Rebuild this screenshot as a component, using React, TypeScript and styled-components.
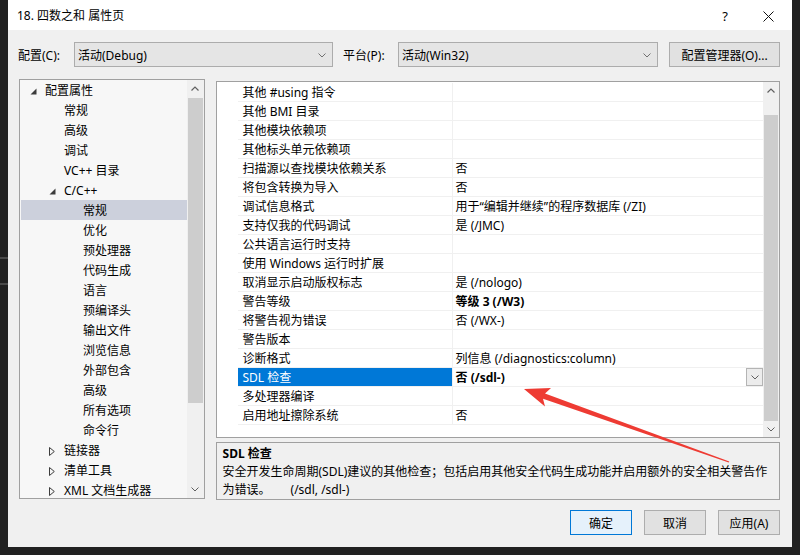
import React from "react";
import styled, { createGlobalStyle } from "styled-components";

const GlobalStyle = createGlobalStyle`
  html, body { margin: 0; padding: 0; background: #212121; }
  body {
    font-family: "Noto Sans", "Noto Sans CJK SC", sans-serif;
    font-size: 12px;
    color: #000;
  }
  * { box-sizing: border-box; }
`;

const Page = styled.div`
  position: relative;
  width: 800px;
  height: 555px;
  padding: 0 8px 8px 8px;
  background-color: #212121;
  background-image: linear-gradient(#4a4a4a, #4a4a4a), linear-gradient(#4a4a4a, #4a4a4a);
  background-size: 8px 2px, 8px 2px;
  background-position: 0 257px, 0 283px;
  background-repeat: no-repeat;
`;

const Dialog = styled.div`
  width: 784px;
  height: 547px;
  background: #f0f0f0;
  display: flex;
  flex-direction: column;
`;

const TitleBar = styled.div`
  height: 30px;
  background: #fff;
  display: flex;
  align-items: center;
  padding: 2px 9px 0 9px;
`;

const TitleText = styled.div`
  flex: 1;
  font-size: 12px;
  line-height: 16px;
`;

const HelpGlyph = styled.div`
  width: 20px;
  text-align: center;
  font-size: 13px;
  line-height: 16px;
  margin-right: 18px;
`;

const CloseBox = styled.div`
  width: 30px;
  height: 20px;
  display: flex;
  align-items: center;
  justify-content: center;
`;

const ConfigRow = styled.div`
  margin-top: 12px;
  height: 25px;
  display: flex;
  align-items: center;
  padding-left: 10px;
`;

const FieldLabel = styled.div<{ $w: number; $ml?: number }>`
  width: ${(p) => p.$w}px;
  margin-left: ${(p) => p.$ml ?? 0}px;
  padding-top: 2px;
  line-height: 16px;
`;

const Combo = styled.div<{ $w: number }>`
  width: ${(p) => p.$w}px;
  height: 25px;
  background: #e5e5e5;
  border: 1px solid #acacac;
  display: flex;
  align-items: center;
  padding: 2px 6px 0 3px;
  line-height: 16px;
`;

const ComboText = styled.div`
  flex: 1;
`;

const PushButton = styled.div<{ $w: number; $ml?: number; $default?: boolean }>`
  width: ${(p) => p.$w}px;
  height: 25px;
  margin-left: ${(p) => p.$ml ?? 0}px;
  padding-top: 2px;
  background: ${(p) => (p.$default ? "#e5f1fb" : "#e1e1e1")};
  border: 1px solid ${(p) => (p.$default ? "#0078d7" : "#adadad")};
  display: flex;
  align-items: center;
  justify-content: center;
  line-height: 16px;
`;

const Main = styled.div`
  margin-top: 12px;
  display: flex;
  padding: 0 12px 0 11px;
  gap: 11px;
`;

const TreePanel = styled.div`
  width: 186px;
  height: 420px;
  border: 1px solid #a0a0a0;
  background: #f7f7f7;
  display: flex;
`;

const TreeList = styled.div`
  flex: 1;
  margin-left: 1px;
  display: flex;
  flex-direction: column;
  overflow: hidden;
`;

const TreeRow = styled.div<{ $level: number; $selected?: boolean }>`
  height: 20px;
  flex: none;
  display: flex;
  align-items: center;
  padding-top: 2px;
  padding-left: ${(p) => 5 + 19 * p.$level}px;
  background: ${(p) => (p.$selected ? "#ccd0dc" : "transparent")};
  white-space: nowrap;
  line-height: 16px;
`;

const Toggle = styled.div`
  width: 19px;
  height: 16px;
  display: flex;
  align-items: center;
  padding-left: 4px;
  flex: none;
`;

const ScrollBar = styled.div<{ $w: number }>`
  width: ${(p) => p.$w}px;
  flex: none;
  display: flex;
  flex-direction: column;
  background: #f0f0f0;
`;

const ScrollArrow = styled.div<{ $h: number }>`
  height: ${(p) => p.$h}px;
  flex: none;
  display: flex;
  align-items: center;
  justify-content: center;
`;

const ScrollTrack = styled.div<{ $before: number }>`
  flex: 1;
  padding-top: ${(p) => p.$before}px;
  display: flex;
  flex-direction: column;
`;

const ScrollThumb = styled.div<{ $h: number }>`
  height: ${(p) => p.$h}px;
  margin: 0 1px;
  background: #cdcdcd;
`;

const RightColumn = styled.div`
  width: 566px;
  padding-top: 2px;
  display: flex;
  flex-direction: column;
  gap: 4px;
`;

const GridPanel = styled.div`
  height: 357px;
  border: 1px solid #a0a0a0;
  background: #fff;
  display: flex;
`;

const Gutter = styled.div`
  width: 21px;
  flex: none;
`;

const GridRows = styled.div`
  flex: 1;
  padding-top: 1px;
  display: flex;
  flex-direction: column;
`;

const GridRow = styled.div`
  height: 19px;
  display: flex;
  border-bottom: 1px solid #f0f0f0;
`;

const NameCell = styled.div<{ $selected?: boolean }>`
  width: 215px;
  flex: none;
  padding: 2px 0 0 5px;
  display: flex;
  align-items: center;
  border-right: 1px solid #f0f0f0;
  background: ${(p) => (p.$selected ? "#0078d7" : "transparent")};
  color: ${(p) => (p.$selected ? "#fff" : "#000")};
  white-space: nowrap;
  line-height: 16px;
`;

const ValueCell = styled.div<{ $bold?: boolean }>`
  flex: 1;
  padding-left: 3px;
  display: flex;
  align-items: center;
  font-weight: ${(p) => (p.$bold ? 700 : 400)};
  white-space: nowrap;
  line-height: 16px;
`;

const ValueText = styled.div`
  flex: 1;
  padding-top: 2px;
`;

const DropButton = styled.div`
  width: 17px;
  height: 18px;
  border: 1px solid #b4b4b4;
  background: #ececec;
  display: flex;
  align-items: center;
  justify-content: center;
`;

const DescPanel = styled.div`
  height: 58px;
  border: 1px solid #a0a0a0;
  background: #f0f0f0;
  padding: 2px 6px 0 6px;
`;

const DescTitle = styled.div`
  font-weight: 700;
  line-height: 18px;
`;

const DescLine = styled.div`
  line-height: 18px;
  white-space: nowrap;
`;

const DescSwitch = styled.span`
  margin-left: 20px;
`;

const Footer = styled.div`
  margin-top: 10px;
  display: flex;
  justify-content: flex-end;
  gap: 12px;
  padding-right: 12px;
`;

const Overlay = styled.svg`
  position: absolute;
  left: 0;
  top: 0;
  pointer-events: none;
`;

const ChevronDown = ({ color = "#606060" }: { color?: string }) => (
  <svg width="8" height="5" viewBox="0 0 8 5">
    <polyline points="0.5,0.5 4,4 7.5,0.5" fill="none" stroke={color} strokeWidth="1" />
  </svg>
);

const ChevronUp = ({ color = "#606060" }: { color?: string }) => (
  <svg width="8" height="5" viewBox="0 0 8 5">
    <polyline points="0.5,4.5 4,1 7.5,4.5" fill="none" stroke={color} strokeWidth="1.2" />
  </svg>
);

const Expanded = () => (
  <svg width="7" height="7" viewBox="0 0 7 7">
    <polygon points="6.5,0.5 6.5,6.5 0.5,6.5" fill="#3c3c3c" />
  </svg>
);

const Collapsed = () => (
  <svg width="6" height="9" viewBox="0 0 6 9">
    <polygon points="0.5,0.5 5.3,4.5 0.5,8.5" fill="none" stroke="#3c3c3c" strokeWidth="1" />
  </svg>
);

type TreeItem = { label: string; level: number; toggle?: "open" | "closed"; selected?: boolean };

const treeItems: TreeItem[] = [
  { label: "配置属性", level: 0, toggle: "open" },
  { label: "常规", level: 1 },
  { label: "高级", level: 1 },
  { label: "调试", level: 1 },
  { label: "VC++ 目录", level: 1 },
  { label: "C/C++", level: 1, toggle: "open" },
  { label: "常规", level: 2, selected: true },
  { label: "优化", level: 2 },
  { label: "预处理器", level: 2 },
  { label: "代码生成", level: 2 },
  { label: "语言", level: 2 },
  { label: "预编译头", level: 2 },
  { label: "输出文件", level: 2 },
  { label: "浏览信息", level: 2 },
  { label: "外部包含", level: 2 },
  { label: "高级", level: 2 },
  { label: "所有选项", level: 2 },
  { label: "命令行", level: 2 },
  { label: "链接器", level: 1, toggle: "closed" },
  { label: "清单工具", level: 1, toggle: "closed" },
  { label: "XML 文档生成器", level: 1, toggle: "closed" },
];

type Prop = { name: string; value: string; bold?: boolean; selected?: boolean };

const props: Prop[] = [
  { name: "其他 #using 指令", value: "" },
  { name: "其他 BMI 目录", value: "" },
  { name: "其他模块依赖项", value: "" },
  { name: "其他标头单元依赖项", value: "" },
  { name: "扫描源以查找模块依赖关系", value: "否" },
  { name: "将包含转换为导入", value: "否" },
  { name: "调试信息格式", value: "用于“编辑并继续”的程序数据库 (/ZI)" },
  { name: "支持仅我的代码调试", value: "是 (/JMC)" },
  { name: "公共语言运行时支持", value: "" },
  { name: "使用 Windows 运行时扩展", value: "" },
  { name: "取消显示启动版权标志", value: "是 (/nologo)" },
  { name: "警告等级", value: "等级 3 (/W3)", bold: true },
  { name: "将警告视为错误", value: "否 (/WX-)" },
  { name: "警告版本", value: "" },
  { name: "诊断格式", value: "列信息 (/diagnostics:column)" },
  { name: "SDL 检查", value: "否 (/sdl-)", bold: true, selected: true },
  { name: "多处理器编译", value: "" },
  { name: "启用地址擦除系统", value: "否" },
];

export default function App() {
  return (
    <>
      <GlobalStyle />
      <Page>
        <Dialog>
          <TitleBar>
            <TitleText>18. 四数之和 属性页</TitleText>
            <HelpGlyph>?</HelpGlyph>
            <CloseBox>
              <svg width="11" height="11" viewBox="0 0 11 11">
                <path d="M0.5 0.5 L10.5 10.5 M10.5 0.5 L0.5 10.5" stroke="#111" strokeWidth="1" />
              </svg>
            </CloseBox>
          </TitleBar>

          <ConfigRow>
            <FieldLabel $w={56}>配置(C):</FieldLabel>
            <Combo $w={259}>
              <ComboText>活动(Debug)</ComboText>
              <ChevronDown color="#707070" />
            </Combo>
            <FieldLabel $w={55} $ml={10}>平台(P):</FieldLabel>
            <Combo $w={260}>
              <ComboText>活动(Win32)</ComboText>
              <ChevronDown color="#707070" />
            </Combo>
            <PushButton $w={111} $ml={11}>配置管理器(O)...</PushButton>
          </ConfigRow>

          <Main>
            <TreePanel>
              <TreeList>
                {treeItems.map((it, i) => (
                  <TreeRow key={i} $level={it.level} $selected={it.selected}>
                    {it.toggle ? (
                      <Toggle>{it.toggle === "open" ? <Expanded /> : <Collapsed />}</Toggle>
                    ) : (
                      <Toggle />
                    )}
                    {it.label}
                  </TreeRow>
                ))}
              </TreeList>
              <ScrollBar $w={17}>
                <ScrollArrow $h={17}>
                  <ChevronUp />
                </ScrollArrow>
                <ScrollTrack $before={1}>
                  <ScrollThumb $h={305} />
                </ScrollTrack>
                <ScrollArrow $h={17}>
                  <ChevronDown />
                </ScrollArrow>
              </ScrollBar>
            </TreePanel>

            <RightColumn>
              <GridPanel>
                <Gutter />
                <GridRows>
                  {props.map((p, i) => (
                    <GridRow key={i}>
                      <NameCell $selected={p.selected}>{p.name}</NameCell>
                      <ValueCell $bold={p.bold}>
                        <ValueText>{p.value}</ValueText>
                        {p.selected && (
                          <DropButton>
                            <ChevronDown color="#606060" />
                          </DropButton>
                        )}
                      </ValueCell>
                    </GridRow>
                  ))}
                </GridRows>
                <ScrollBar $w={16}>
                  <ScrollArrow $h={17}>
                    <ChevronUp />
                  </ScrollArrow>
                  <ScrollTrack $before={16}>
                    <ScrollThumb $h={306} />
                  </ScrollTrack>
                  <ScrollArrow $h={16}>
                    <ChevronDown />
                  </ScrollArrow>
                </ScrollBar>
              </GridPanel>

              <DescPanel>
                <DescTitle>SDL 检查</DescTitle>
                <DescLine>安全开发生命周期(SDL)建议的其他检查；包括启用其他安全代码生成功能并启用额外的安全相关警告作</DescLine>
                <DescLine>
                  为错误。<DescSwitch>(/sdl, /sdl-)</DescSwitch>
                </DescLine>
              </DescPanel>
            </RightColumn>
          </Main>

          <Footer>
            <PushButton $w={62} $default>确定</PushButton>
            <PushButton $w={62}>取消</PushButton>
            <PushButton $w={62}>应用(A)</PushButton>
          </Footer>
        </Dialog>

        <Overlay width="800" height="555" viewBox="0 0 800 555">
          <polygon
            points="524,389 551,388 545,393.5 729.3,461.4 728.7,462.6 543,398.8 545,406.5"
            fill="#ee3b33"
          />
        </Overlay>
      </Page>
    </>
  );
}
